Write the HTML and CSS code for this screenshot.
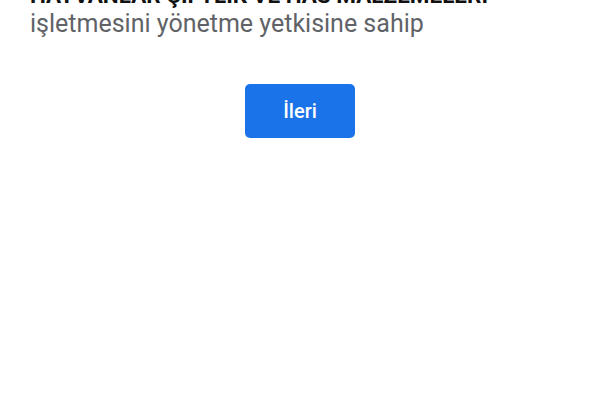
FILE: index.html
```html
<!DOCTYPE html>
<html lang="tr">
<head>
<meta charset="utf-8">
<link rel="stylesheet" href="styles.css">
</head>
<body>
<main class="page">
  <h1 class="title">HAYVANLAR ÇİFTLİK VE HAS MALZEMELERİ</h1>
  <p class="subtitle">işletmesini yönetme yetkisine sahip</p>
  <div class="actions">
    <button class="btn-next" type="button">İleri</button>
  </div>
</main>
</body>
</html>
```

FILE: styles.css
```css
html, body {
  margin: 0;
  padding: 0;
  background: #ffffff;
}

.page {
  padding: 0 30px;
  font-family: Roboto, "Liberation Sans", sans-serif;
}

.title {
  margin: -17px 0 0;
  font-size: 22.5px;
  line-height: 24px;
  font-weight: 700;
  color: #111111;
  white-space: nowrap;
}

.subtitle {
  margin: 3px 0 0;
  font-size: 25px;
  line-height: 28px;
  font-weight: 400;
  color: #5f6368;
}

.actions {
  display: flex;
  justify-content: center;
  margin-top: 46px;
}

.btn-next {
  height: 54px;
  padding: 0 38px;
  border: none;
  border-radius: 5px;
  background: #1a73e8;
  color: #ffffff;
  font-family: Roboto, "Liberation Sans", sans-serif;
  font-size: 20px;
  font-weight: 500;
}
```
